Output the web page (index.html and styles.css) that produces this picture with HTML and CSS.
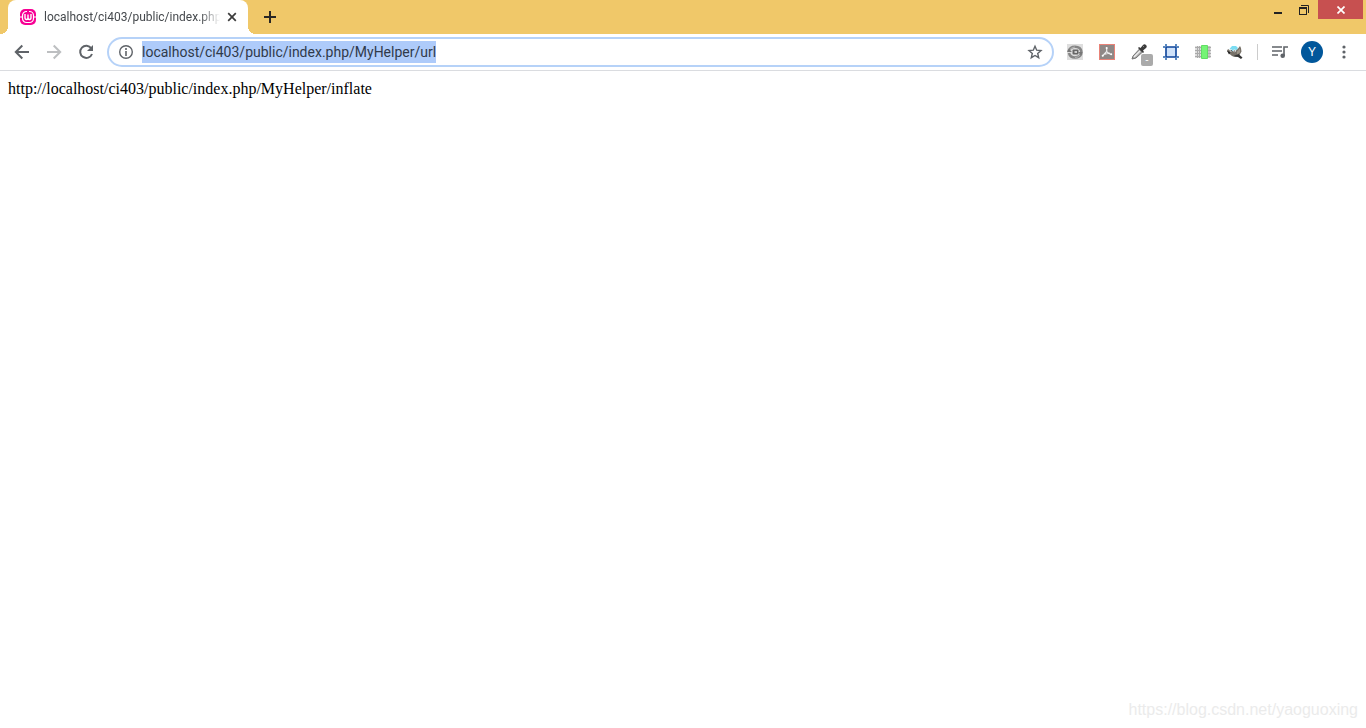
FILE: index.html
```html
<!DOCTYPE html>
<html lang="en">
<head>
<meta charset="utf-8">
<title>localhost/ci403/public/index.php</title>
<link rel="stylesheet" href="styles.css">
</head>
<body>
<header class="browser">
  <div class="titlebar">
    <div class="tab">
      <svg class="favicon" width="16" height="16" viewBox="0 0 16 16" aria-hidden="true">
        <rect width="16" height="16" rx="5" fill="#f70094"/>
        <rect x="2.500" y="2.500" width="11" height="11" rx="4" fill="none" stroke="#fff" stroke-width="1.200"/>
        <path d="M0 8h2.500M13.500 8H16" stroke="#fff" stroke-width="1.200"/>
        <path d="M7 1.500h2v2H7z" fill="#f70094"/>
        <path d="M5 5v3.500q0 2 1.500 2T8 8.500V5.500M8 8.500q0 2 1.500 2t1.500-2V5" fill="none" stroke="#fff" stroke-width="1.400"/>
      </svg>
      <span class="tab-title">localhost/ci403/public/index.php</span>
      <button class="tab-close" aria-label="Close tab"><svg width="10" height="10" viewBox="0 0 10 10"><path d="M1.200 1.200l7.600 7.600M8.800 1.200L1.200 8.800" stroke="#3c3c3c" stroke-width="1.700"/></svg></button>
    </div>
    <button class="new-tab" aria-label="New tab"><svg width="12" height="12" viewBox="0 0 12 12"><path d="M6 0v12M0 6h12" stroke="#292724" stroke-width="2"/></svg></button>
    <div class="window-controls">
      <button class="minimize" aria-label="Minimize"><svg width="8" height="12" viewBox="0 0 8 12"><path d="M0 8h8v2H0z" fill="#222"/></svg></button>
      <button class="restore" aria-label="Restore"><svg width="10" height="10" viewBox="0 0 10 10"><path d="M2 .5h7.500V8" fill="none" stroke="#222"/><path d="M0 2h8v8H0zM1 4v5h6V4z" fill="#222" fill-rule="evenodd"/></svg></button>
      <button class="close" aria-label="Close window"><svg width="8" height="8" viewBox="0 0 8 8"><path d="M.5 .5l7 7M7.500 .5l-7 7" stroke="#fff" stroke-width="1.700"/></svg></button>
    </div>
  </div>
  <nav class="toolbar" aria-label="Browser toolbar">
    <button class="tool" aria-label="Back"><svg width="16" height="16" viewBox="0 0 16 16"><path d="M15 8H2M8.300 1.500L1.800 8l6.500 6.500" fill="none" stroke="#5f6368" stroke-width="2"/></svg></button>
    <button class="tool" aria-label="Forward" disabled><svg width="16" height="16" viewBox="0 0 16 16"><path d="M1 8h13M7.700 1.500L14.200 8l-6.500 6.500" fill="none" stroke="#bdbfc1" stroke-width="2"/></svg></button>
    <button class="tool" aria-label="Reload"><svg width="16" height="16" viewBox="0 0 16 16"><path d="M13.300 4.300A6.100 6.100 0 1 0 14 10" fill="none" stroke="#5f6368" stroke-width="2"/><path d="M15 1v6H9z" fill="#5f6368"/></svg></button>
    <div class="address">
      <button class="info" aria-label="View site information"><svg width="16" height="16" viewBox="0 0 16 16"><circle cx="8" cy="8" r="6.300" fill="none" stroke="#5f6368" stroke-width="1.400"/><path d="M8 4v2M8 7v5" stroke="#5f6368" stroke-width="1.600"/></svg></button>
      <input class="url" type="text" aria-label="Address" value="localhost/ci403/public/index.php/MyHelper/url" spellcheck="false">
      <button class="star" aria-label="Bookmark this page"><svg width="16" height="16" viewBox="0 0 16 16"><path d="M8 2.200l1.700 4 4.300.4-3.300 2.900 1 4.200L8 11.500l-3.700 2.200 1-4.200L2 6.600l4.300-.4z" fill="none" stroke="#5f6368" stroke-width="1.400"/></svg></button>
    </div>
    <button class="tool" aria-label="Sync extension"><svg width="16" height="16" viewBox="0 0 16 16"><path d="M0 0h16v16H0z" fill="#dedede"/><path d="M1.500 7.500C2.500 4 5 2.800 8 2.800c3.500 0 6 2 6.500 5.200M14.500 9c-1 3.200-3.500 4.500-6.500 4.500-3.200 0-5.300-1.500-6-4.500" fill="none" stroke="#858585" stroke-width="2.600"/><path d="M11 8h5l-2 3zM0 8h5L2 5z" fill="#777"/><path d="M3 5.500q2-2.500 5-2.500M13 11q-2 2.500-5 2.500" fill="none" stroke="#b5b5b5"/><rect x="5.500" y="5.500" width="6" height="5" rx="1" fill="#666"/><rect x="7.500" y="7" width="2.500" height="2" fill="#ccc"/></svg></button>
    <button class="tool" aria-label="PDF extension"><svg width="16" height="16" viewBox="0 0 16 16"><rect x=".5" y=".5" width="15" height="15" fill="#8f8886" stroke="#e98277"/><path d="M7.700 3.500v4L3.500 12M7.700 7.500c1 1.700 2.500 2.700 4.800 3M4.500 10.500L11 9" fill="none" stroke="#eee" stroke-width="1.200"/><circle cx="7.600" cy="4" r="1" fill="#fff"/><circle cx="3.700" cy="11.700" r="1" fill="#fff"/><circle cx="12.200" cy="10.300" r="1" fill="#fff"/></svg></button>
    <button class="tool picker" aria-label="Color picker"><svg width="16" height="16" viewBox="0 0 16 16"><path d="M1 15l1-3 6.500-7 3 3L5 14z" fill="#aaa" stroke="#747474"/><path d="M3 13l6-6" stroke="#eee" stroke-width="1.500"/><path d="M7 4l1-1 1.500 1L12 1q1.500-1.500 3 0t0 3l-3 2.500 1 1.500-1 1z" fill="#3b3b3b"/><path d="M12 3l1-1" stroke="#888"/></svg><span class="badge">-</span></button>
    <button class="tool" aria-label="Frame extension"><svg width="16" height="16" viewBox="0 0 16 16"><path d="M3 3h10v10H3z" fill="#cfe2fa"/><path d="M3 0v2M13 0v2M3 14v2M13 14v2M0 3h2M0 13h2M14 3h2M14 13h2" stroke="#2563aa" stroke-width="1.500"/><path d="M3 3h10v10H3z" fill="none" stroke="#0b439a" stroke-width="1.600"/></svg></button>
    <button class="tool" aria-label="Layout extension"><svg width="16" height="16" viewBox="0 0 16 16"><path d="M0 2h16v12H0z" fill="#ddd"/><path d="M2.500 2v12M4.500 2v12M14 2v12M0 3.500h16M0 6.500h16M0 9.500h16M0 12.500h16" stroke="#aaa"/><path d="M6.500 1.500h6v13h-6z" fill="#75f476" stroke="#62dc65"/></svg></button>
    <button class="tool" aria-label="Image editor extension"><svg width="16" height="16" viewBox="0 0 16 16"><path d="M2.500 5l2.500-3h4l2 2-2 3H5z" fill="#7bdcf2"/><path d="M1 5l3 2q3 0 5-.500 2-1.500 4-4.500 1.500 2 1.500 5.500L12 12q-3 2-7 0L1.500 9 0 7z" fill="#777168"/><path d="M6.500 12l5-2 4 3.500-1.500 1.500-3-2z" fill="#353535"/><path d="M10 7.500l3-3v4l-3 2z" fill="#9e9588"/><circle cx="4" cy="6.500" r="1.200" fill="#eee"/><circle cx="7.500" cy="6.800" r="1.400" fill="#eee"/><circle cx="4.200" cy="6.700" r=".6" fill="#111"/><circle cx="7.300" cy="7" r=".6" fill="#111"/><path d="M0 6.500l3.500 2-1.500 2z" fill="#222"/></svg></button>
    <span class="divider"></span>
    <button class="tool" aria-label="Media controls"><svg width="16" height="16" viewBox="0 0 16 16"><path d="M0 3h10M0 7h10M0 11h6M12 12V3h4" fill="none" stroke="#5f6368" stroke-width="1.600"/><circle cx="10.700" cy="11.700" r="2.300" fill="#5f6368"/></svg></button>
    <button class="tool" aria-label="Profile"><span class="avatar">Y</span></button>
    <button class="tool" aria-label="Menu"><svg width="4" height="14" viewBox="0 0 4 14"><g fill="#5f6368"><circle cx="2" cy="2" r="1.600"/><circle cx="2" cy="7" r="1.600"/><circle cx="2" cy="12" r="1.600"/></g></svg></button>
  </nav>
</header>
<main class="page">http://localhost/ci403/public/index.php/MyHelper/inflate</main>
<footer class="watermark">https://blog.csdn.net/yaoguoxing</footer>
</body>
</html>
```

FILE: styles.css
```css
* { box-sizing: border-box; }
body {
  margin: 0;
  min-height: 100vh;
  display: flex;
  flex-direction: column;
  background: #fff;
  color: #000;
}
button {
  display: flex;
  align-items: center;
  justify-content: center;
  padding: 0;
  border: 0;
  background: none;
}
svg { display: block; flex: none; }
.browser { font-family: Roboto, "Open Sans", sans-serif; }
.titlebar {
  display: flex;
  height: 34px;
  padding: 0 3px 0 8px;
  background: #f0c869;
}
.tab {
  position: relative;
  display: flex;
  align-items: center;
  width: 240px;
  padding: 0 8px 0 12px;
  border-radius: 8px 8px 0 0;
  background: #fff;
}
.tab::before, .tab::after {
  content: "";
  position: absolute;
  bottom: 0;
  width: 8px;
  height: 8px;
}
.tab::before { right: 100%; background: radial-gradient(circle at 0 0, transparent 8px, #fff 8px); }
.tab::after { left: 100%; background: radial-gradient(circle at 100% 0, transparent 8px, #fff 8px); }
.tab-title {
  flex: 1;
  min-width: 0;
  margin-left: 8px;
  overflow: hidden;
  white-space: nowrap;
  font-size: 12px;
  line-height: 16px;
  color: #45494d;
  mask-image: linear-gradient(to left, transparent, #000 20px);
}
.tab-close { width: 16px; height: 16px; margin-left: 4px; }
.new-tab { width: 28px; margin-left: 8px; }
.window-controls { display: flex; align-items: flex-start; margin-left: auto; }
.minimize, .restore { width: 26px; height: 19px; }
.restore { margin-right: 1px; }
.close { width: 45px; height: 19px; background: #c75050; }
.toolbar {
  display: flex;
  align-items: center;
  height: 37px;
  padding: 0 6px;
  border-bottom: 1px solid #dadce0;
}
.tool { width: 32px; height: 32px; flex: none; }
.address {
  flex: 1;
  min-width: 0;
  display: flex;
  align-items: center;
  height: 30px;
  margin: 0 5px;
  padding: 0 9px;
  border: 2px solid #b6d2f8;
  border-radius: 15px;
}
.info { width: 16px; height: 16px; margin-right: 8px; }
.url {
  field-sizing: content;
  min-width: 0;
  height: 22px;
  padding: 0;
  border: 0;
  outline: 0;
  background: #aecbfa;
  font: 14px/22px Roboto, "Open Sans", sans-serif;
  color: #303a4a;
}
.star { width: 16px; height: 16px; margin-left: auto; }
.picker { position: relative; }
.badge {
  position: absolute;
  right: 2px;
  bottom: 2px;
  width: 12px;
  height: 12px;
  border-radius: 2px;
  background: #aaa;
  color: #fff;
  font-size: 10px;
  line-height: 11px;
}
.divider { width: 1px; height: 16px; margin: 0 6px; background: #ccc; }
.avatar {
  width: 22px;
  height: 22px;
  border-radius: 50%;
  background: #01579b;
  color: #fff;
  font-size: 12px;
  line-height: 22px;
}
.page {
  flex: 1;
  padding: 8px;
  font: 16px/20px "Liberation Serif", "Times New Roman", serif;
}
.watermark {
  padding: 0 8px 8px;
  text-align: right;
  font: 16px/20px "Liberation Sans", Arial, sans-serif;
  color: #ebebeb;
}
```
